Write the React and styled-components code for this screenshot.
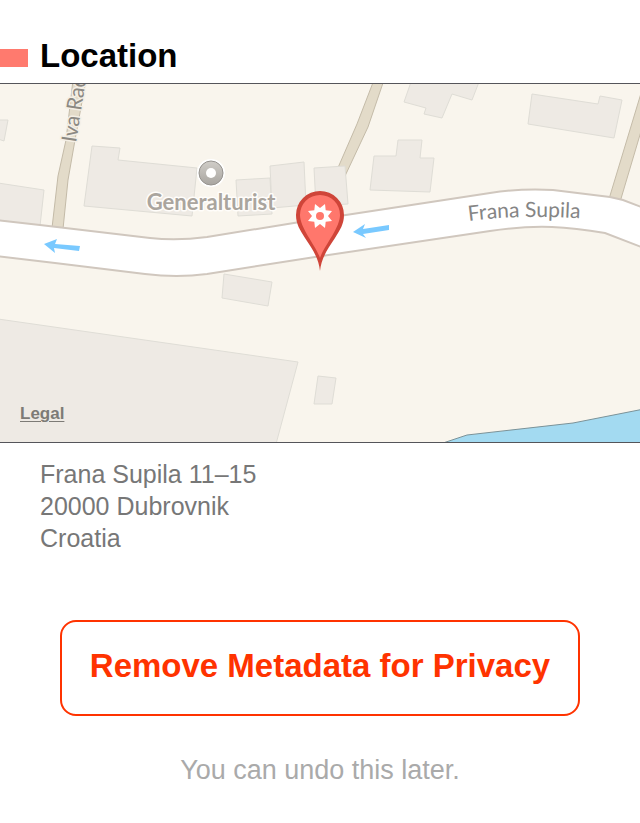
import React from "react";
import styled, { createGlobalStyle } from "styled-components";

const GlobalStyle = createGlobalStyle`
  * { box-sizing: border-box; }
  body {
    margin: 0;
    background: #fff;
    font-family: "Liberation Sans", Arial, sans-serif;
  }
`;

const Page = styled.main`
  display: flex;
  flex-direction: column;
`;

const Header = styled.header`
  display: flex;
  align-items: center;
  gap: 12px;
  padding: 36px 20px 7px 0;
`;

const Marker = styled.span`
  width: 28px;
  height: 18px;
  margin-top: 4px;
  background: #ff7a6e;
`;

const Title = styled.h1`
  margin: 0;
  font-size: 33px;
  line-height: 40px;
  font-weight: 700;
  color: #000;
`;

const MapFrame = styled.section`
  position: relative;
  border-top: 1px solid #55555a;
  border-bottom: 1px solid #55555a;
  background: #f9f5ed;
`;

const MapDrawing = styled.svg`
  display: block;
  width: 100%;
  height: auto;
`;

const Building = styled.path`
  fill: #eeeae4;
  stroke: #dfddd6;
  stroke-width: 1;
`;

const SideRoad = styled.path`
  fill: #e3dbc9;
  stroke: #c4bba8;
  stroke-width: 1;
`;

const MapLabel = styled.text`
  font-family: Lato, sans-serif;
  font-size: ${(p) => p.$size}px;
  font-weight: ${(p) => p.$weight || 400};
  fill: ${(p) => p.$color};
  stroke: ${(p) => p.$halo || "none"};
  stroke-width: 3;
  stroke-linejoin: round;
  paint-order: stroke;
`;

const LegalLink = styled.a`
  position: absolute;
  left: 20px;
  bottom: 18px;
  font-size: 17px;
  line-height: 20px;
  font-weight: 700;
  color: #7d7b76;
  text-decoration: underline;
  text-decoration-thickness: 1px;
  text-underline-offset: 2px;
`;

const Address = styled.address`
  padding: 15px 40px 0;
  font-size: 25px;
  line-height: 32px;
  font-style: normal;
  color: #777;
`;

const Line = styled.div``;

const Actions = styled.section`
  display: flex;
  flex-direction: column;
  gap: 38px;
  padding: 66px 60px 36px;
`;

const RemoveButton = styled.button`
  width: 100%;
  padding: 24px 12px 28px;
  border: 2px solid #ff3300;
  border-radius: 16px;
  background: transparent;
  color: #ff3300;
  font-family: inherit;
  font-size: 33px;
  font-weight: 700;
  line-height: 40px;
  cursor: pointer;
`;

const Hint = styled.p`
  margin: 0;
  text-align: center;
  font-size: 27px;
  line-height: 32px;
  color: #aaa;
`;

const buildings = [
  "M-2 120 L8 120 L4 141 L-2 139 Z",
  "M-2 183 L44 190 L40 226 L-2 220 Z",
  "M92 146 L120 148 L118 160 L197 168 L192 216 L84 206 Z",
  "M236 180 L270 178 L272 214 L238 216 Z",
  "M270 166 L304 162 L306 205 L272 208 Z",
  "M314 168 L345 166 L348 204 L316 206 Z",
  "M374 156 L396 156 L398 140 L422 140 L420 158 L434 158 L430 192 L370 190 Z",
  "M411 82 L404 102 L426 108 L424 114 L442 118 L452 94 L472 100 L479 82 Z",
  "M532 94 L598 104 L600 96 L622 100 L614 138 L528 124 Z",
  "M224 274 L272 282 L268 306 L222 298 Z",
  "M318 376 L336 378 L332 404 L314 404 Z",
  "M-2 319 L298 362 L276 444 L-2 444 Z",
];

const sideRoads = [
  "M73 80 L66 140 L58 176 L52 228 L63 229 L68 180 L75 140 L86 80 Z",
  "M374 80 L357 124 L337 170 L345 176 L368 127 L384 80 Z",
  "M642 90 L609 199 L620 202 L642 128 Z",
];

const starPoints = Array.from({ length: 16 }, (_, i) => {
  const radius = i % 2 === 0 ? 13 : 8;
  const angle = ((i + 1) * Math.PI) / 8;
  return `${(320 + radius * Math.cos(angle)).toFixed(1)},${(216 + radius * Math.sin(angle)).toFixed(1)}`;
}).join(" ");

function LocationMap() {
  return (
    <MapDrawing viewBox="0 84 640 358" role="img" aria-label="Map of Frana Supila">
      <defs>
        <linearGradient id="poi" x1="0" y1="0" x2="0" y2="1">
          <stop offset="0" stopColor="#d0cdc8" />
          <stop offset="1" stopColor="#a9a6a1" />
        </linearGradient>
      </defs>
      {sideRoads.map((d) => (
        <SideRoad key={d} d={d} />
      ))}
      {buildings.map((d) => (
        <Building key={d} d={d} />
      ))}
      <path
        d="M-4 220 L40 225 L150 238 Q177 241 207 237 L300 222 L490 193 Q522 188 553 190 L610 197 L623 200 L644 208 L644 248 L605 233 Q575 228 552 227 Q522 226 490 231 L315 257 L207 274 Q177 278 145 274 L55 263 L-4 256 Z"
        fill="#fff"
        stroke="#d0c7be"
        strokeWidth="2"
      />
      <path d="M440 444 L467 435 L573 423 L644 409 L644 446 Z" fill="#a3daf1" stroke="#7b9298" strokeWidth="1" />
      <path d="M44 244 L57 239 L55 244 L80 246 L79 251 L54 248 L55 253 Z" fill="#79c9ff" />
      <path d="M353 232 L365 224 L363 229 L389 225 L389 230 L363 234 L366 238 Z" fill="#79c9ff" />
      <circle cx="211" cy="173" r="14" fill="#fff" />
      <circle cx="211" cy="173" r="12" fill="url(#poi)" stroke="#96938f" strokeWidth="1" />
      <circle cx="211" cy="173" r="5" fill="#fff" />
      <MapLabel x="211" y="210" textAnchor="middle" $size={22} $weight={700} $color="#aaa59e" $halo="#fffdfa">
        Generalturist
      </MapLabel>
      <MapLabel x="0" y="0" transform="translate(76 143) rotate(-81)" $size={21} $color="#8c8983" $halo="#f4efe5">
        Iva Rad
      </MapLabel>
      <path id="street" d="M469 221 Q520 214 590 219" fill="none" />
      <MapLabel $size={21} $color="#858585">
        <textPath href="#street">Frana Supila</textPath>
      </MapLabel>
      <path
        d="M320 271 C319 260 314 251 305 238 C300 230 296 224 296 215 A24 24 0 0 1 344 215 C344 224 340 230 335 238 C326 251 321 260 320 271 Z"
        fill="#cf4539"
      />
      <path
        d="M320 258 C316 246 300 228 300 215 A20 20 0 0 1 340 215 C340 228 324 246 320 258 Z"
        fill="#ff776c"
      />
      <polygon points={starPoints} fill="#fff" />
      <circle cx="320" cy="216" r="4" fill="#ff776c" />
    </MapDrawing>
  );
}

export default function App() {
  return (
    <Page>
      <GlobalStyle />
      <Header>
        <Marker />
        <Title>Location</Title>
      </Header>
      <MapFrame>
        <LocationMap />
        <LegalLink href="#legal">Legal</LegalLink>
      </MapFrame>
      <Address>
        <Line>Frana Supila 11–15</Line>
        <Line>20000 Dubrovnik</Line>
        <Line>Croatia</Line>
      </Address>
      <Actions>
        <RemoveButton type="button">Remove Metadata for Privacy</RemoveButton>
        <Hint>You can undo this later.</Hint>
      </Actions>
    </Page>
  );
}
